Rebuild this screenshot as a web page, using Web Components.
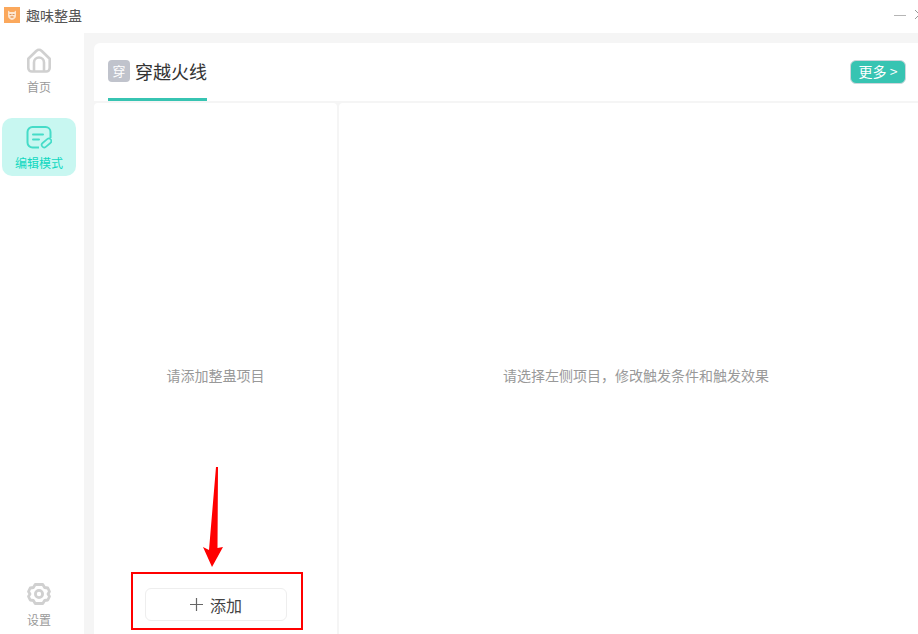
<!DOCTYPE html>
<html lang="zh"><head><meta charset="utf-8"><style>
html,body{margin:0;padding:0;height:100%;overflow:hidden;background:#fff}
body{font-family:"Noto Sans CJK SC","Noto Sans",sans-serif}
</style></head><body>
<app-shell></app-shell>
<script>
function def(name,html){customElements.define(name,class extends HTMLElement{constructor(){super();this.attachShadow({mode:'open'}).innerHTML=html;}});}
def('title-bar',`<style>
:host{display:flex;align-items:center;height:33px;flex:none;background:#fff;overflow:hidden;position:relative}
.logo{width:16px;height:16px;margin-left:4px;margin-top:-3px;flex:none;display:block}
.t{margin-left:6px;margin-top:-3px;font-size:14px;line-height:16px;color:#555}
.min{margin-left:auto;width:12px;height:1px;background:#b5b5b5;margin-top:-2px}
.x{margin-left:9px;margin-right:-6px;width:9px;height:9px;margin-top:-4px;flex:none;display:block}
</style>
<svg class="logo" viewBox="0 0 16 16"><rect width="16" height="16" fill="#fba85c"/><path d="M4 3.500 6 5h4l2-1.500V9c0 2-2 3.500-4 4-2-.5-4-2-4-4z" fill="#fde6d0"/><path d="M5.500 7.500h2M8.500 7.500h2" stroke="#d9925a" stroke-width="1"/><path d="M6.500 10h3" stroke="#e59a5a" stroke-width="1.500"/></svg>
<span class="t">趣味整蛊</span><span class="min"></span>
<svg class="x" viewBox="0 0 9 9"><path d="M0 0 9 9M9 0 0 9" stroke="#999" stroke-width="1" fill="none"/></svg>`);
def('nav-item',`<style>
:host{display:flex;flex-direction:column;align-items:center;width:74px;height:58px;border-radius:10px;font-size:12px;line-height:16px;color:#9a9a9a;box-sizing:border-box;padding-top:6px}
:host([active]){background:#c8f7f1;color:#0fd8c0}
::slotted(svg){display:block;width:26px;height:26px;margin-bottom:5px}
span{display:block}
</style><slot name="icon"></slot><span><slot></slot></span>`);
def('side-bar',`<style>
:host{display:flex;flex-direction:column;align-items:center;width:84px;flex:none;background:#fff;box-sizing:border-box;padding:9px 8px 0 2px}
.sp{flex:1}
.top{height:76px;width:74px}
.bot{height:58px;margin-bottom:1px}
</style><div class="top"><slot name="home"></slot></div><slot name="edit"></slot><div class="sp"></div><div class="bot"><slot name="set"></slot></div>`);
def('tab-header',`<style>
:host{display:flex;align-items:stretch;height:58px;flex:none;background:#fff;border-radius:6px 0 0 0;padding:0 12px 0 14px;justify-content:space-between}
.tab{display:flex;align-items:center;gap:5px;border-bottom:3px solid #37c4b2;box-sizing:border-box;height:58px}
.b{width:22px;height:22px;border-radius:4px;background:#c0c3cc;color:#fff;font-size:13px;line-height:22px;text-align:center}
.n{font-size:18px;line-height:24px;color:#333}
.more{align-self:flex-start;margin-top:17px;width:56px;height:24px;box-sizing:border-box;border:1px solid #cfd6dc;border-radius:6px;background:#37c4b2;color:#fff;font-size:14px;line-height:21px;text-align:center;white-space:nowrap}
</style><div class="tab"><span class="b">穿</span><span class="n">穿越火线</span></div><div class="more">更多 &gt;</div>`);
def('empty-panel',`<style>
:host{display:flex;align-items:center;justify-content:center;background:#fff;font-size:14px;line-height:18px;color:#999;min-width:0;box-sizing:border-box;padding-top:13px;position:relative}
</style><slot></slot>`);
def('add-button',`<style>
:host{display:flex;align-items:center;justify-content:center;gap:7px;width:142px;height:33px;box-sizing:border-box;border:1px solid #eeeeee;border-radius:6px;background:#fff;color:#444;font-size:16px;line-height:20px}
svg{display:block;width:13px;height:13px}
</style><svg viewBox="0 0 13 13"><path d="M6.500 0v13M0 6.500h13" stroke="#666" stroke-width="1.200"/></svg><span>添加</span>`);
def('app-shell',`<style>
:host{display:flex;flex-direction:column;width:918px;height:634px;overflow:hidden;position:relative}
.body{display:flex;flex:1;min-height:0}
.main{flex:1;min-width:0;background:#f5f5f5;padding:10px 0 0 10px;display:flex;flex-direction:column;gap:2px}
.cols{flex:1;min-height:0;display:grid;grid-template-columns:243px 1fr;gap:2px}
.left{border-radius:4px 4px 0 0}
.right{padding-left:15px;border-radius:4px 0 0 0}
.redbox{position:absolute;left:131px;top:572px;width:172px;height:58px;box-sizing:border-box;border:2px solid #f00;display:flex;align-items:center;justify-content:center;background:transparent;padding:7px 2px 0 0}
.arrow{position:absolute;left:202px;top:466px;width:24px;height:103px}
</style>
<title-bar></title-bar>
<div class="body">
<side-bar>
<nav-item slot="home"><svg slot="icon" viewBox="0 0 26 26" fill="none" stroke="#d0d0d0" stroke-width="2.600" stroke-linejoin="round"><path d="M2.300 10.800 10.500 2.800a3.500 3.500 0 0 1 5 0l8.200 8V20a3.500 3.500 0 0 1-3.500 3.500H5.800A3.500 3.500 0 0 1 2.300 20z"/><path d="M8 23.500V14.500a5 5 0 0 1 10 0V23.500"/></svg>首页</nav-item>
<nav-item slot="edit" active><svg slot="icon" viewBox="0 0 26 26" fill="none" stroke="#45dcc8" stroke-width="2"><path d="M13 23.500H6.500a5 5 0 0 1-5-5V8a5 5 0 0 1 5-5h13a5 5 0 0 1 5 5v6"/><path d="M7 10.500h10M7 15.500h6" stroke-linecap="round"/><rect x="15" y="16.500" width="11" height="5" rx="2.500" transform="rotate(-40 20.500 19)" stroke-width="1.700"/></svg>编辑模式</nav-item>
<nav-item slot="set"><svg slot="icon" viewBox="0 0 26 26" fill="none" stroke="#d0d0d0" stroke-width="2.800" stroke-linejoin="round"><path d="M9.200 3.500h7.600l1.800 3 3.200.5 1.700 3.500-1.500 2.500 1.500 2.500-1.700 3.500-3.200.5-1.800 3H9.200l-1.800-3-3.200-.5-1.700-3.500L4 13l-1.500-2.500L4.200 7l3.200-.5z"/><circle cx="13" cy="13" r="3.600"/></svg>设置</nav-item>
</side-bar>
<div class="main">
<tab-header></tab-header>
<div class="cols">
<empty-panel class="left">请添加整蛊项目</empty-panel>
<empty-panel class="right">请选择左侧项目，修改触发条件和触发效果</empty-panel>
</div>
</div>
</div>
<svg class="arrow" viewBox="0 0 24 103"><path d="M14 1h2L15.500 82 21 81 10 101 1 81 7 84z" fill="#f00"/></svg>
<div class="redbox"><add-button></add-button></div>`);
</script></body></html>
